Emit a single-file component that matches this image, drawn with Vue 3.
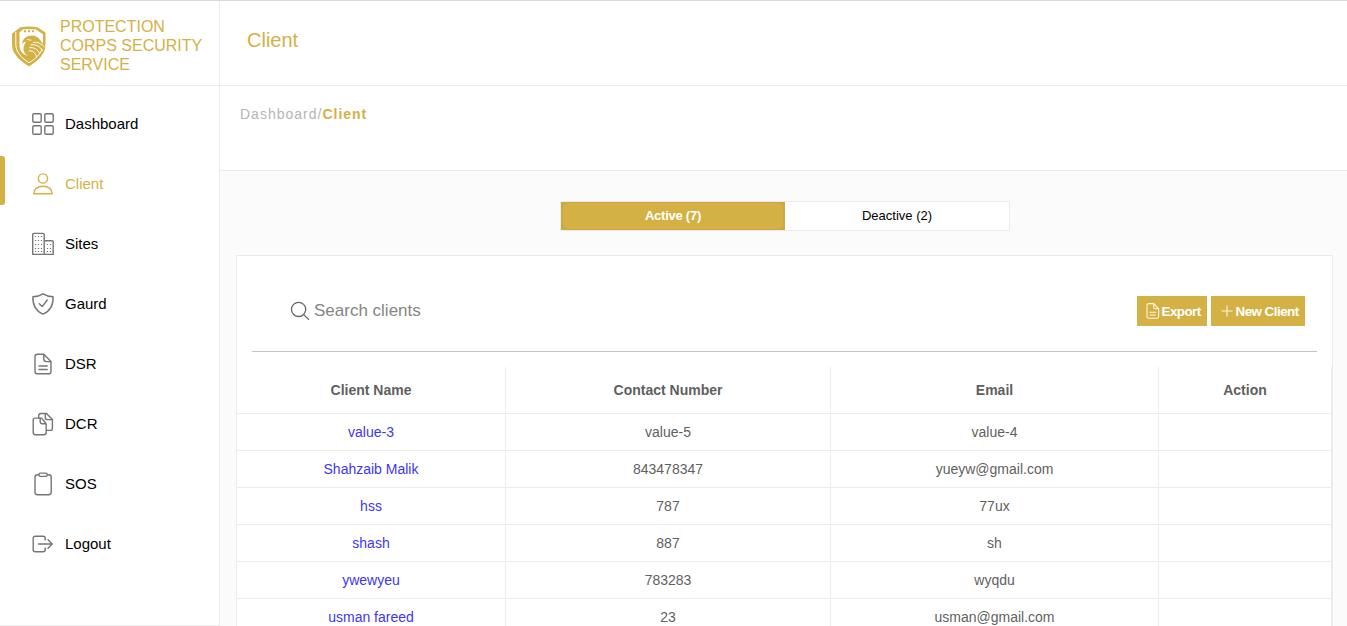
<script setup>
const menu = [
  { label: 'Dashboard', icon: 'grid' },
  { label: 'Client', icon: 'user', active: true },
  { label: 'Sites', icon: 'building' },
  { label: 'Gaurd', icon: 'shield' },
  { label: 'DSR', icon: 'doc' },
  { label: 'DCR', icon: 'docs' },
  { label: 'SOS', icon: 'clipboard' },
  { label: 'Logout', icon: 'logout' },
]
const columns = ['Client Name', 'Contact Number', 'Email', 'Action']
const clients = [
  { name: 'value-3', phone: 'value-5', email: 'value-4' },
  { name: 'Shahzaib Malik', phone: '843478347', email: 'yueyw@gmail.com' },
  { name: 'hss', phone: '787', email: '77ux' },
  { name: 'shash', phone: '887', email: 'sh' },
  { name: 'ywewyeu', phone: '783283', email: 'wyqdu' },
  { name: 'usman fareed', phone: '23', email: 'usman@gmail.com' },
]
</script>

<template>
  <div class="app">
    <aside class="sidebar">
      <div class="brand">
        <svg class="logo" viewBox="0 0 36 42">
          <path d="M9.5 2.2 Q18 .8 26.5 2.2 L34.5 7.5 V20 C34.5 28.5 27 36 18 41.5 C9 36 1 28.5 1 20 V8.5 Z" fill="#d4b145" />
          <path d="M4.8 7 V19.5 C5 27 10 32.5 18 37.8 C24 34 29 30 31 24" fill="none" stroke="#fff" stroke-width="1" />
          <path d="M8.5 7.5 L12 4.2 H24.5 L32 9.3 V19 C29 15 26 12.5 22 13 C17 14 13 18 12.5 23 C12.5 27 15 29.5 18 31 C11.5 30 8 25.5 8.5 19 Z" fill="#fff" />
          <path d="M13 5.2 h2 v2 h-2z M17 5.2 h2 v2 h-2z M21 5.2 h2 v2 h-2z" fill="#d4b145" />
          <path d="M11.2 19 C11.2 15.5 13.3 12.5 17 11.2 C22 9.4 27 11.5 29.5 15.5 L32.5 20 C30 18.2 27.5 17.6 25 18.2 C21 18.6 17.5 21 17 25 C16.8 28 18.5 30.5 21 32 C16 31.5 12.3 28 12.8 23.5 C13 21 14.8 18.8 17 17.5 C14.5 16.6 12.6 17 11.2 19 Z" fill="#d4b145" />
          <path d="M22 17.6 C27 16.5 30.5 19 33.5 22 M19.6 20 C25 18.8 29 21.5 31.5 25.5 M18.2 22.8 C23 21.8 26.8 24.5 28.8 29 M17.8 26 C21.5 25.3 24.5 28 25.8 32" fill="none" stroke="#fff" stroke-width="1" />
          <path d="M16 14.5 L20.3 15.3" stroke="#fff" stroke-width=".8" />
        </svg>
        <span class="brand-name">PROTECTION CORPS SECURITY SERVICE</span>
      </div>
      <nav class="menu">
        <a v-for="item in menu" :key="item.label" class="menu-item" :class="{ active: item.active }">
          <svg class="icon" viewBox="0 0 24 24">
            <template v-if="item.icon === 'grid'">
              <rect x="1.8" y="1.8" width="8.4" height="8.4" rx="1.2" />
              <rect x="13.8" y="1.8" width="8.4" height="8.4" rx="1.2" />
              <rect x="1.8" y="13.8" width="8.4" height="8.4" rx="1.2" />
              <rect x="13.8" y="13.8" width="8.4" height="8.4" rx="1.2" />
            </template>
            <template v-else-if="item.icon === 'user'">
              <circle cx="12" cy="6.5" r="4.6" />
              <path d="M2.8 21.8 C2.8 17.5 6.2 14.2 12 14.2 S21.2 17.5 21.2 21.8 Z" />
            </template>
            <template v-else-if="item.icon === 'building'">
              <path d="M1.7 22.4 V2.5 Q1.7 1.4 2.8 1.4 H12.1 Q13.2 1.4 13.2 2.5 V22.4 M13.2 8.8 H21.1 Q22.2 8.8 22.2 9.9 V22.4 H1.7" />
              <path class="dots" d="M3.9 4.5 H12 M3.9 8.5 H12 M3.9 12.5 H12 M3.9 16.5 H12 M3.9 19.5 H12 M15.9 12.5 H21 M15.9 16.5 H21 M15.9 19.5 H21" />
            </template>
            <template v-else-if="item.icon === 'shield'">
              <path d="M12 1.8 C9.5 3.4 5 4.6 1.9 4.8 C1.6 13 4.5 19 12 22.2 C19.5 19 22.4 13 22.1 4.8 C19 4.6 14.5 3.4 12 1.8 Z" />
              <path d="M8.3 11.8 L11.2 14.6 L16.2 8" />
            </template>
            <template v-else-if="item.icon === 'doc'">
              <path d="M12.8 2.2 H6.4 Q4 2.2 4 4.6 V19.4 Q4 21.8 6.4 21.8 H17.6 Q20 21.8 20 19.4 V9.6 Z M12.8 2.2 V6.8 Q12.8 9.6 15.5 9.6 H20 M8 14 H16.2 M8 17.5 H16.2" />
            </template>
            <template v-else-if="item.icon === 'docs'">
              <path d="M10.7 6.1 H4.3 Q2.2 6.1 2.2 8.2 V20.6 Q2.2 22.7 4.3 22.7 H13 Q15.2 22.7 15.2 20.6 V12 Z M9.2 6.1 V9.8 Q9.2 11.7 11.2 11.7 H15.2" />
              <path d="M7.7 6 V3.7 Q7.7 1.5 9.9 1.5 H15.5 L21.4 7.6 V16.2 Q21.4 18.4 19.2 18.4 H15.5 M14.3 1.5 V5.8 Q14.3 7.6 16.2 7.6 H21.2" />
            </template>
            <template v-else-if="item.icon === 'clipboard'">
              <rect x="4" y="2.7" width="16.2" height="20" rx="2.4" />
              <rect class="clip" x="8" y="1.1" width="8.2" height="3.3" rx="1.3" />
            </template>
            <template v-else>
              <path d="M14.2 8 V6.2 Q14.2 4.2 12.2 4.2 H4.2 Q2.2 4.2 2.2 6.2 V17.8 Q2.2 19.8 4.2 19.8 H12.2 Q14.2 19.8 14.2 17.8 V16 M7.5 12 H21.2 M17 7.8 L21.2 12 L17 16.2" />
            </template>
          </svg>
          <span class="label">{{ item.label }}</span>
        </a>
      </nav>
    </aside>

    <main class="main">
      <header class="topbar">Client</header>
      <div class="crumbs">Dashboard/<b>Client</b></div>
      <div class="content">
        <div class="tabs">
          <div class="tab selected"><span>Active (7)</span></div>
          <div class="tab"><span>Deactive (2)</span></div>
        </div>
        <section class="panel">
          <div class="toolbar">
            <div class="search">
              <svg viewBox="0 0 20 20">
                <circle cx="8.6" cy="8.4" r="7.1" />
                <path d="M13.7 13.6 L18.6 18.4" />
              </svg>
              <span>Search clients</span>
            </div>
            <div class="actions">
              <button class="btn export">
                <svg viewBox="0 0 14 16">
                  <path d="M7.7 .6 H2.6 Q1 .6 1 2.2 V13.6 Q1 15.2 2.6 15.2 H11 Q12.6 15.2 12.6 13.6 V5.8 Z M7.7 .6 V4.2 Q7.7 5.8 9.3 5.8 H12.6 M3.6 9.2 H10 M3.6 12 H10" />
                </svg>Export
              </button>
              <button class="btn create">
                <svg viewBox="0 0 14 16"><path d="M7 2.5 V13.5 M1.5 8 H12.5" /></svg>New Client
              </button>
            </div>
          </div>
          <table>
            <colgroup>
              <col class="c1" /><col class="c2" /><col class="c3" /><col class="c4" />
            </colgroup>
            <thead>
              <tr><th v-for="c in columns" :key="c">{{ c }}</th></tr>
            </thead>
            <tbody>
              <tr v-for="r in clients" :key="r.name">
                <td class="link">{{ r.name }}</td>
                <td>{{ r.phone }}</td>
                <td>{{ r.email }}</td>
                <td></td>
              </tr>
            </tbody>
          </table>
        </section>
      </div>
    </main>
  </div>
</template>

<style>
body { margin: 0; overflow: hidden; }
</style>

<style scoped>
.app {
  box-sizing: border-box;
  display: flex;
  height: 626px;
  overflow: hidden;
  border-top: 1px solid #d9d9d9;
  background: #fff;
  font-family: "Liberation Sans", Arial, sans-serif;
}
.sidebar {
  box-sizing: border-box;
  flex: none;
  width: 220px;
  border-right: 1px solid #ebebeb;
  border-bottom: 1px solid #ebebeb;
}
.brand {
  box-sizing: border-box;
  display: flex;
  height: 85px;
  padding: 16px 0 0 11px;
  border-bottom: 1px solid #ebebeb;
  color: #d4b145;
}
.logo { flex: none; width: 36px; height: 42px; margin-top: 8px; }
.brand-name { width: 150px; margin-left: 13px; font-size: 16px; line-height: 19px; }
.menu { padding-top: 8px; }
.menu-item {
  position: relative;
  display: flex;
  align-items: center;
  height: 60px;
  padding-left: 31px;
  color: #000;
  font-size: 15px;
}
.label { padding-bottom: 2px; }
.icon { width: 24px; height: 24px; margin-right: 10px; fill: none; stroke: #757575; stroke-width: 1.4; stroke-linejoin: round; stroke-linecap: round; }
.icon .dots { stroke-width: 1; stroke-dasharray: 1.2 1.8; stroke-linecap: butt; }
.icon .clip { fill: #fff; }
.active { color: #d4b145; }
.active .icon { stroke: #d4b145; }
.active::before {
  content: "";
  position: absolute;
  left: 0;
  top: 2px;
  width: 5px;
  height: 49px;
  border-radius: 0 3px 3px 0;
  background: #d4b145;
}
.main { flex: 1; display: flex; flex-direction: column; min-width: 0; }
.topbar {
  box-sizing: border-box;
  flex: none;
  height: 85px;
  padding: 28px 0 0 27px;
  border-bottom: 1px solid #ebebeb;
  color: #d4b145;
  font-size: 20px;
  line-height: 23px;
}
.crumbs {
  box-sizing: border-box;
  flex: none;
  height: 85px;
  padding: 20px 0 0 20px;
  border-bottom: 1px solid #ebebeb;
  color: #b5b5b5;
  font-size: 14px;
  line-height: 16px;
  letter-spacing: 1px;
}
.crumbs b { color: #d4b145; }
.content { flex: 1; min-height: 0; padding: 30px 14px 0 16px; background: #fbfbfb; }
.tabs {
  box-sizing: border-box;
  display: flex;
  width: 450px;
  height: 30px;
  margin: 0 0 24px 324px;
  border: 1px solid #ebebeb;
  background: #fff;
}
.tab { box-sizing: border-box; width: 224px; text-align: center; font-size: 13px; line-height: 27px; color: #000; }
.selected { display: flex; padding: 1px 2px; background: #ccaa42; color: #fff; font-weight: bold; letter-spacing: -0.25px; line-height: 25px; }
.selected span { flex: 1; border-radius: 6px; background: #d4b145; }
.panel { box-sizing: border-box; width: 1097px; height: 400px; border: 1px solid #ebebeb; background: #fff; }
.toolbar {
  box-sizing: border-box;
  display: flex;
  justify-content: space-between;
  height: 96px;
  margin: 0 15px 15px;
  padding: 40px 12px 0 38px;
  border-bottom: 1px solid #c4c4c4;
}
.search { display: flex; height: 30px; color: #858585; font-size: 17px; line-height: 29px; }
.search svg { width: 20px; height: 20px; margin: 5px 4px 0 0; fill: none; stroke: #666; stroke-width: 1.3; stroke-linecap: round; }
.actions { display: flex; gap: 4px; }
.btn {
  box-sizing: border-box;
  display: flex;
  align-items: center;
  height: 30px;
  border: 0;
  padding: 0;
  background: #d4b145;
  color: #fff;
  font: bold 13.333px "Liberation Sans", Arial, sans-serif;
  letter-spacing: -0.5px;
  white-space: nowrap;
}
.btn svg { width: 14px; height: 16px; fill: none; stroke: #fbf5e3; stroke-width: 1.1; }
.export { width: 70px; padding-left: 9px; }
.export svg { margin-right: 1.5px; }
.create { width: 94px; padding-left: 9px; }
.create svg { margin-right: 1.5px; }
table { width: 1095px; table-layout: fixed; border-collapse: separate; border-spacing: 0; color: #5f5f5f; font-size: 14px; }
.c1 { width: 269px; }
.c2 { width: 325px; }
.c3 { width: 328px; }
.c4 { width: 173px; }
th, td { box-sizing: border-box; padding: 0; border-right: 1px solid #ebebeb; border-bottom: 1px solid #ebebeb; text-align: center; }
th { height: 47px; }
td { height: 37px; }
td.link { color: #3d36f5; }
</style>
